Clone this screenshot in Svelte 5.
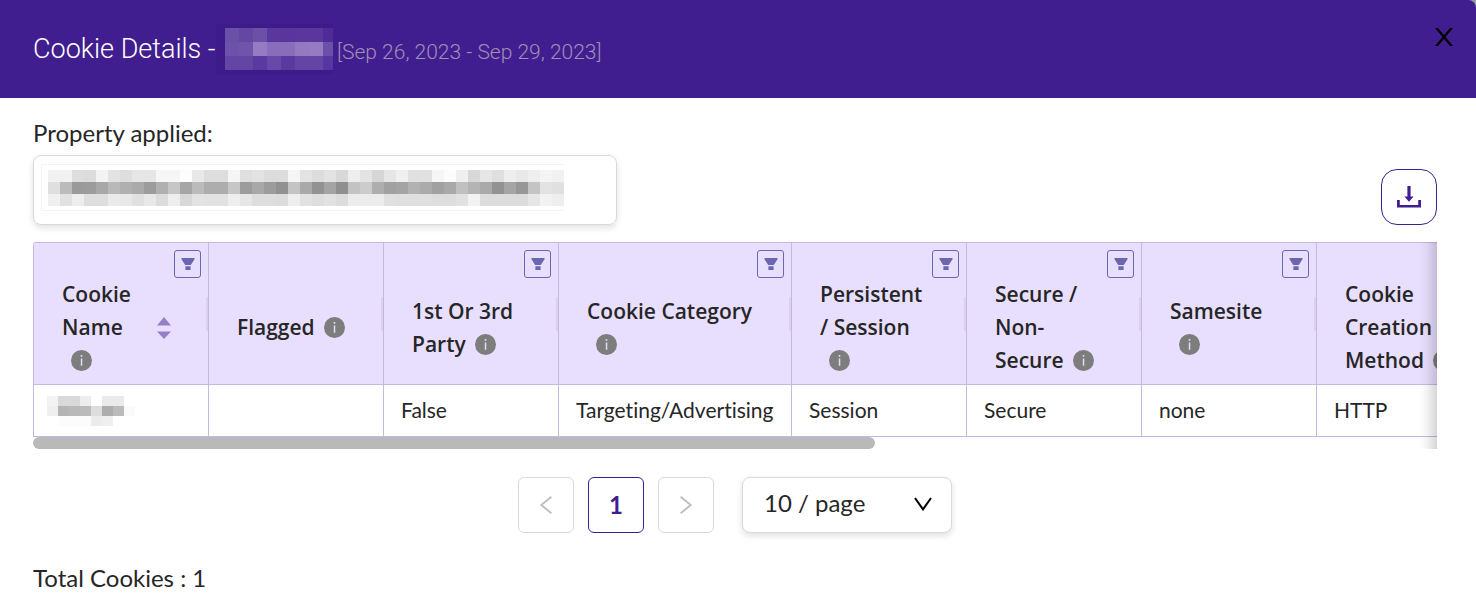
<script>
  let pageSize = $state("10");

  // redacted values, one pair of hex digits per block
  const propertyMask = [
    "f1f1dedcf3e3dee6e6f6f6fde8ddddf5dfe3dcdcf5e3dce3d8eee3d6e6f0e0e0f6fcefd8e6dfeee8eef4f1",
    "dfbb9a9ca8b9b0aa9cb0c6a6bbadadc69ca89c91c4a992a48fc3ccaea1a4b2aba1a9c0b4aa92a597c4e3e0",
    "f0e2eddedeeae8e0e8dceed8e3e2e2eee6dddddceee2dee2dcececece0dfdfdfdddde2f2dcdcdcdce6f2ee",
  ].map((row) => row.match(/../g).map((v) => `#${v}${v}${v}`));

  const nameMask = [
    "f3d9d9edffeaeaff",
    "efb5b9bbddadbbfa",
    "fffcfcfcecefffff",
  ].map((row) => row.match(/../g).map((v) => `#${v}${v}${v}`));

  const titleMask = [
    ["#6b50a8", "#6347a3", "#6b50a8", "#5a379d", "#58369d", "#5a379d", "#5a379d", "#4e2b97"],
    ["#6d52ab", "#7054ac", "#957cc2", "#886dbb", "#886dbb", "#9279c0", "#957cc2", "#6b50aa"],
    ["#6345a5", "#6345a5", "#5a3aa0", "#6848a8", "#5a3aa0", "#6444a4", "#6444a4", "#5636a0"],
  ];

  const columns = [
    { title: "Cookie Name", filter: true, sort: true },
    { title: "Flagged" },
    { title: "1st Or 3rd Party", filter: true },
    { title: "Cookie Category", filter: true, wide: true },
    { title: "Persistent / Session", filter: true },
    { title: "Secure / Non-Secure", filter: true },
    { title: "Samesite", filter: true },
    { title: "Cookie Creation Method", filter: true },
  ];

  const rows = [
    ["", "False", "Targeting/Advertising", "Session", "Secure", "none", "HTTP"],
  ];
</script>

{#snippet mosaic(blocks, w, h)}
  <svg
    width={blocks[0].length * w}
    height={blocks.length * h}
    shape-rendering="crispEdges"
    role="img"
    aria-label="Redacted"
  >
    {#each blocks as line, y}
      {#each line as fill, x}
        <rect x={x * w} y={y * h} width={w} height={h} {fill} />
      {/each}
    {/each}
  </svg>
{/snippet}

<div class="modal">
  <header>
    <h1>
      <span class="title">Cookie Details -</span>
      <span class="title-mask">{@render mosaic(titleMask, 14, 14)}</span>
      <span class="range">[Sep 26, 2023 - Sep 29, 2023]</span>
    </h1>
    <button class="close" aria-label="Close">
      <svg width="18" height="18" viewBox="0 0 18 18">
        <path d="M0 0H3L18 18H15ZM15 0H18L3 18H0Z" />
      </svg>
    </button>
  </header>

  <main>
    <div class="toolbar">
      <div class="property">
        <div class="label">Property applied:</div>
        <div class="property-box">
          <div class="property-value">{@render mosaic(propertyMask, 12, 12)}</div>
        </div>
      </div>
      <button class="download" aria-label="Download">
        <svg width="24" height="24" viewBox="0 0 24 24">
          <path d="M10.4 1h3.2v10.6h3L12 16.8 7.4 11.6h3z" />
          <path d="M0 15h2.8v5h18.4v-5H24v7.6H0z" />
        </svg>
      </button>
    </div>

    <div class="table-wrap">
      <table>
        <colgroup>
          {#each columns as col}
            <col class:wide={col.wide} />
          {/each}
          <col class="rest" />
        </colgroup>
        <thead>
          <tr>
            {#each columns as col}
              <th scope="col">
                {#if col.filter}
                  <button class="filter" aria-label="Filter {col.title}">
                    <svg width="14" height="12" viewBox="0 0 14 12">
                      <path d="M0.5 0h13v1.2L9.8 7H4.2L0.5 1.2zM4.4 8.2h5.2V12H4.4z" />
                    </svg>
                  </button>
                {/if}
                <div class="head">
                  <span class="name">{col.title}<svg class="info" width="21" height="21" viewBox="0 0 21 21" aria-hidden="true">
                      <circle cx="10.5" cy="10.5" r="10.5" fill="#7d7d7d" />
                      <path d="M9.7 5h1.6v1.8H9.7zM9.8 8.4h1.5v7.4H9.8z" fill="#e2dcf0" />
                    </svg></span>
                  {#if col.sort}
                    <button class="sort" aria-label="Sort by {col.title}">
                      <svg width="14" height="22" viewBox="0 0 14 22">
                        <path d="M7 0l7 8.4H0zM7 22L0 14.4h14z" />
                      </svg>
                    </button>
                  {/if}
                </div>
              </th>
            {/each}
            <th></th>
          </tr>
        </thead>
        <tbody>
          {#each rows as row}
            <tr>
              <td class="masked">{@render mosaic(nameMask, 11, 10)}</td>
              {#each row as cell}
                <td>{cell}</td>
              {/each}
              <td></td>
            </tr>
          {/each}
        </tbody>
      </table>
      <div class="scrollbar"><div class="thumb"></div></div>
    </div>

    <nav class="pagination" aria-label="Pagination">
      <button class="page-btn" aria-label="Previous page" disabled>
        <svg width="12" height="18" viewBox="0 0 12 18"><path d="M11.4 0.8L1.2 9l10.2 8.2" /></svg>
      </button>
      <button class="page-btn active" aria-current="page">1</button>
      <button class="page-btn" aria-label="Next page" disabled>
        <svg width="12" height="18" viewBox="0 0 12 18"><path d="M0.6 0.8L10.8 9L0.6 17.2" /></svg>
      </button>
      <div class="page-size">
        <select aria-label="Rows per page" bind:value={pageSize}>
          <option value="10">10 / page</option>
          <option value="20">20 / page</option>
          <option value="50">50 / page</option>
        </select>
        <svg width="18" height="14" viewBox="0 0 18 14" aria-hidden="true"><path d="M1 1l8 11.4L17 1" /></svg>
      </div>
    </nav>

    <div class="total">Total Cookies : 1</div>
  </main>
</div>

<style>
  :global(body) { background: #fff; }

  .modal {
    background: linear-gradient(#999 12px, #fff 12px);
    font-family: Lato, "Open Sans", sans-serif;
    font-variant-ligatures: none;
    color: #262626;
  }
  button { padding: 0; border: none; background: none; font: inherit; cursor: pointer; }

  header {
    display: flex;
    justify-content: space-between;
    height: 98px;
    padding: 0 23px 0 33px;
    background: #411e8f;
    border-top-right-radius: 8px;
  }
  h1 {
    display: flex;
    align-items: center;
    height: 98px;
    margin: 0;
    font-family: Roboto, "Open Sans", sans-serif;
    font-size: 27px;
    font-weight: 300;
    color: #fff;
    white-space: nowrap;
  }
  .title { min-width: 183px; }
  .title-mask {
    display: flex;
    box-sizing: border-box;
    width: 117px;
    margin-right: 4px;
    padding: 4px 0 4px 9px;
    overflow: hidden;
    background: #3e1b8b;
  }
  .title-mask svg { flex-shrink: 0; }
  .range { padding-top: 6px; font-size: 21px; color: #a08fb6; }
  .close { display: flex; align-self: flex-start; margin-top: 28px; }

  main { padding: 17px 39px 12px 33px; background: #fff; }

  .toolbar { display: flex; justify-content: space-between; align-items: flex-end; }
  .property { width: 584px; }
  .label { font-size: 24px; line-height: 36px; }
  .property-box {
    box-sizing: border-box;
    height: 70px;
    margin-top: 4px;
    padding: 8px 7px;
    border: 1px solid #d9d9d9;
    border-radius: 8px;
    box-shadow: 0 3px 6px rgba(0, 0, 0, 0.12);
  }
  .property-value {
    display: flex;
    width: max-content;
    padding: 5px 0 4px 6px;
    border: 1px solid #f3f3f3;
    border-right: none;
  }
  .download {
    display: flex;
    align-items: center;
    justify-content: center;
    width: 56px;
    height: 56px;
    border: 1px solid #411e8f;
    border-radius: 16px;
    fill: #411e8f;
  }

  .table-wrap { position: relative; margin-top: 17px; overflow: hidden; border-top-left-radius: 3px; }
  .table-wrap::after {
    content: "";
    position: absolute;
    top: 0;
    right: 0;
    bottom: 0;
    width: 18px;
    background: linear-gradient(to left, rgba(0, 0, 0, 0.16), rgba(0, 0, 0, 0.04) 60%, transparent);
  }
  table {
    width: 2338px;
    table-layout: fixed;
    border-collapse: separate;
    border-spacing: 0;
    border-left: 1px solid #c5b9e4;
  }
  col { width: 175px; }
  col.wide { width: 233px; }
  col.rest { width: auto; }

  th {
    position: relative;
    box-sizing: border-box;
    height: 143px;
    padding: 35px 34px 7px 28px;
    background: #e8dfff;
    border: solid #c5b9e4;
    border-width: 1px 1px 1px 0;
    font-family: "Open Sans", sans-serif;
    font-size: 21px;
    font-weight: 600;
    line-height: 33px;
    text-align: left;
    vertical-align: middle;
  }
  th::before {
    content: "";
    position: absolute;
    top: 54px;
    right: 0;
    width: 2px;
    height: 34px;
    background: #dbd1ef;
  }
  .head { display: flex; align-items: center; }
  .name { flex: 1; }
  .info { margin-left: 9px; vertical-align: -3px; }
  .sort { display: flex; margin: 0 3px 0 8px; fill: #9580c8; }
  .filter {
    position: absolute;
    top: 7px;
    right: 7px;
    display: flex;
    align-items: center;
    justify-content: center;
    width: 27px;
    height: 28px;
    border: 1px solid #6b66b0;
    border-radius: 3px;
    fill: #6b66b0;
  }

  td {
    box-sizing: border-box;
    height: 52px;
    padding: 0 0 2px 17px;
    border: solid #c5b9e4;
    border-width: 0 1px 1px 0;
    font-size: 21px;
    white-space: nowrap;
  }
  td.masked { padding: 0 0 0 13px; }
  td.masked svg { display: block; }

  .scrollbar { height: 12px; }
  .thumb { width: 60%; height: 100%; border-radius: 6px; background: #b9b9b9; }

  .pagination { display: flex; justify-content: center; gap: 14px; margin-top: 28px; }
  .page-btn {
    display: flex;
    align-items: center;
    justify-content: center;
    width: 56px;
    height: 56px;
    border: 1px solid #d9d9d9;
    border-radius: 6px;
    font-size: 24px;
  }
  .page-btn svg { fill: none; stroke: #bfbfbf; stroke-width: 2; }
  .page-btn.active { padding-bottom: 2px; border-color: #411e8f; color: #411e8f; font-weight: 700; }
  .page-size { position: relative; margin-left: 14px; }
  .page-size select {
    appearance: none;
    width: 210px;
    height: 56px;
    padding: 0 48px 6px 21px;
    border: 1px solid #d9d9d9;
    border-radius: 8px;
    background: #fff;
    box-shadow: 0 3px 6px rgba(0, 0, 0, 0.12);
    color: inherit;
    font-family: inherit;
    font-size: 24px;
  }
  .page-size svg {
    position: absolute;
    top: 20px;
    right: 20px;
    fill: none;
    stroke: #000;
    stroke-width: 2;
    pointer-events: none;
  }

  .total { margin-top: 27px; font-size: 24px; line-height: 36px; }
</style>
